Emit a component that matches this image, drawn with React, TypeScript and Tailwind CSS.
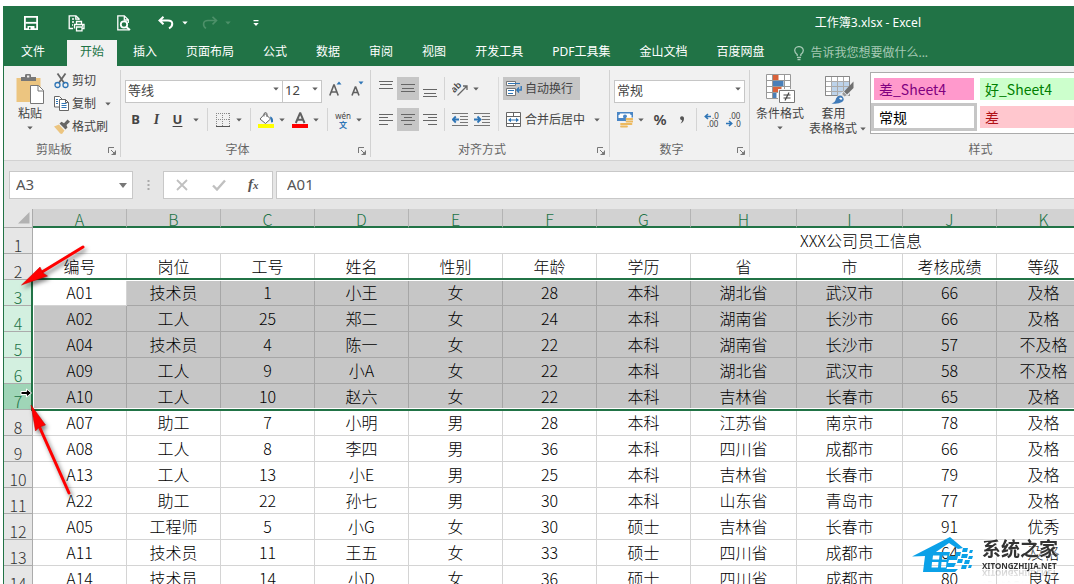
import type { ReactNode } from 'react';

const tabs = ['插入', '页面布局', '公式', '数据', '审阅', '视图', '开发工具', 'PDF工具集', '金山文档', '百度网盘'];

const columns = [
  { letter: 'A', title: '编号', width: 'w-[94px]' },
  { letter: 'B', title: '岗位', width: 'w-[94px]' },
  { letter: 'C', title: '工号', width: 'w-[94px]' },
  { letter: 'D', title: '姓名', width: 'w-[94px]' },
  { letter: 'E', title: '性别', width: 'w-[94px]' },
  { letter: 'F', title: '年龄', width: 'w-[94px]' },
  { letter: 'G', title: '学历', width: 'w-[94px]' },
  { letter: 'H', title: '省', width: 'w-[106px]' },
  { letter: 'I', title: '市', width: 'w-[106px]' },
  { letter: 'J', title: '考核成绩', width: 'w-[94px]' },
  { letter: 'K', title: '等级', width: 'w-[94px]' },
  { letter: '', title: '', width: 'w-[599px]' },
];

const rows = [
  ['A01', '技术员', '1', '小王', '女', '28', '本科', '湖北省', '武汉市', '66', '及格'],
  ['A02', '工人', '25', '郑二', '女', '24', '本科', '湖南省', '长沙市', '66', '及格'],
  ['A04', '技术员', '4', '陈一', '女', '22', '本科', '湖南省', '长沙市', '57', '不及格'],
  ['A09', '工人', '9', '小A', '女', '22', '本科', '湖北省', '武汉市', '58', '不及格'],
  ['A10', '工人', '10', '赵六', '女', '22', '本科', '吉林省', '长春市', '65', '及格'],
  ['A07', '助工', '7', '小明', '男', '28', '本科', '江苏省', '南京市', '78', '及格'],
  ['A08', '工人', '8', '李四', '男', '36', '本科', '四川省', '成都市', '66', '及格'],
  ['A13', '工人', '13', '小E', '男', '25', '本科', '吉林省', '长春市', '79', '及格'],
  ['A22', '助工', '22', '孙七', '男', '30', '本科', '山东省', '青岛市', '77', '及格'],
  ['A05', '工程师', '5', '小G', '女', '30', '硕士', '吉林省', '长春市', '91', '优秀'],
  ['A11', '技术员', '11', '王五', '女', '33', '硕士', '四川省', '成都市', '64', '及格'],
  ['A14', '技术员', '14', '小D', '女', '36', '硕士', '四川省', '成都市', '80', '良好'],
];

function Triangle({ className = 'text-[#606060]' }: { className?: string }) {
  return (
    <svg width="6" height="4" viewBox="0 0 6 4" className={className} aria-hidden="true">
      <path d="M0.3 0.5h5.4L3 3.5z" fill="currentColor" />
    </svg>
  );
}

function Caret({ label }: { label: string }) {
  return (
    <button aria-label={label} className="flex h-full w-4 items-center justify-center">
      <Triangle />
    </button>
  );
}

function Sep() {
  return <span className="mr-[7px] ml-[3px] h-full w-px shrink-0 bg-[#d4d4d4]" />;
}

function IconButton({ label, className = 'w-4', children }: { label: string; className?: string; children: ReactNode }) {
  return (
    <button aria-label={label} className={`flex h-full shrink-0 items-center justify-center ${className}`}>
      {children}
    </button>
  );
}

function Dropdown({ label, value, className }: { label: string; value: string; className: string }) {
  return (
    <span className={`relative block h-full shrink-0 ${className}`}>
      <select
        aria-label={label}
        defaultValue={value}
        className="h-full w-full appearance-none border border-[#c6c6c6] bg-white pb-[3px] pl-0.5 text-[13px] leading-[18px] text-[#444] outline-none"
      >
        <option>{value}</option>
      </select>
      <span className="pointer-events-none absolute inset-y-0 right-1 flex items-center">
        <Triangle />
      </span>
    </span>
  );
}

function Group({ label, width, launcher = true, children }: { label: string; width: string; launcher?: boolean; children: ReactNode }) {
  return (
    <section aria-label={label} className={`flex shrink-0 flex-col border-r border-[#d2d2d2] ${width}`}>
      <div className="h-[72px]">{children}</div>
      <div className="flex h-[15px] items-center pr-1">
        <span className="flex-1 pr-1 text-center text-xs leading-[15px] text-[#666]">{label}</span>
        {launcher ? (
          <button aria-label={`${label}设置`} className="pt-0.5">
            <svg width="8" height="8" viewBox="0 0 8 8" fill="none" stroke="#777" aria-hidden="true">
              <path d="M0.5 6V0.5H6M3 3l3 3M7.5 3.500V7.500H3.500" />
              <path d="M7.500 4v3.500H4z" fill="#777" stroke="none" />
            </svg>
          </button>
        ) : (
          <span className="w-2" />
        )}
      </div>
    </section>
  );
}

function Lines({ rows: spec }: { rows: [number, number, number][] }) {
  return (
    <svg width="14" height="16" viewBox="0 0 14 16" stroke="#666" aria-hidden="true">
      {spec.map(([y, x1, x2]) => (
        <path key={y} d={`M${x1} ${y + 0.5}H${x2}`} />
      ))}
    </svg>
  );
}

function IndentIcon({ increase = false }: { increase?: boolean }) {
  return (
    <svg width="16" height="16" viewBox="0 0 16 16" fill="none" aria-hidden="true">
      <path d="M0 1.500h16M8 4.500h8M8 7.500h8M8 10.500h8M0 13.500h16" stroke="#777" />
      <path d={increase ? 'M0 7.500h6M3.500 4.500l3 3-3 3' : 'M7 7.500H1M3.800 4.500l-3 3 3 3'} stroke="#2e75b6" strokeWidth="1.800" />
    </svg>
  );
}

function TitleBar() {
  return (
    <header className="flex h-[34px] shrink-0 items-center bg-[#217346] pl-5 text-white">
      <button aria-label="保存" className="w-[14px]">
        <svg width="14" height="14" viewBox="0 0 14 14" fill="none" stroke="#fff" strokeWidth="1.800" aria-hidden="true">
          <path d="M0.900 0.900h12.200v12.200H0.900z" />
          <path d="M1.500 6.800h11.500" />
          <path d="M3.500 10h7v3.500h-7z" fill="#fff" stroke="none" />
          <path d="M5 11.200h1.500v2H5z" fill="#217346" stroke="none" />
        </svg>
      </button>
      <button aria-label="快速打印" className="ml-[30px] w-[18px]">
        <svg width="18" height="17" viewBox="0 0 18 17" fill="none" stroke="#fff" strokeWidth="1.300" aria-hidden="true">
          <path d="M5 13.500H1.200V0.800H8l3 3V5M7.800 1v3.200H11" />
          <path d="M4 4h2M4 7h2M4 10h1" />
          <path d="M8.500 9.500V6.500h5v3M6.500 13.500v-4h9.500v4H14M8.500 12h5.500v3.800H8.500zM14 10.800h1" />
        </svg>
      </button>
      <button aria-label="打印预览" className="ml-[30px] w-[16px]">
        <svg width="16" height="16" viewBox="0 0 16 16" fill="none" stroke="#fff" strokeWidth="1.300" aria-hidden="true">
          <path d="M13 14.800H1.800V0.800h6.500l4 4V8M8.300 1v4h4" />
          <circle cx="8" cy="9.500" r="3.200" strokeWidth="1.800" />
          <path d="M10.300 12l3.700 3" strokeWidth="2" />
        </svg>
      </button>
      <button aria-label="撤消" className="ml-[26px] w-4">
        <svg width="16" height="14" viewBox="0 0 16 14" fill="none" stroke="#fff" strokeWidth="2" aria-hidden="true">
          <path d="M5.500 0.800L1.500 4.500l4 3.800M2 4.500h8c5.500 0 5.500 5.500 1 7.800" />
        </svg>
      </button>
      <button aria-label="撤消列表" className="ml-2">
        <Triangle className="text-white" />
      </button>
      <button aria-label="恢复" className="ml-[14px] w-4">
        <svg width="16" height="14" viewBox="0 0 16 14" fill="none" stroke="#4d9069" strokeWidth="1.600" aria-hidden="true">
          <path d="M10.500 0.800l4 3.700-4 3.800M14 4.500H6C0.500 4.500 0.500 10 4 12.300" />
        </svg>
      </button>
      <button aria-label="恢复列表" className="ml-[7px]">
        <Triangle className="text-[#4d9069]" />
      </button>
      <button aria-label="自定义快速访问工具栏" className="ml-[22px]">
        <svg width="6" height="7" viewBox="0 0 6 7" fill="#fff" aria-hidden="true">
          <path d="M0.500 0h5v1.300h-5zM0.300 3h5.400L3 6z" />
        </svg>
      </button>
      <h1 className="mr-[153px] ml-auto text-xs">工作簿3.xlsx - Excel</h1>
    </header>
  );
}

function TabBar() {
  return (
    <nav className="flex h-[26px] shrink-0 items-stretch gap-[3px] bg-[#217346] pl-1 text-xs text-white">
      <button className="shrink-0 px-[13px] pb-0.5">文件</button>
      <button className="ml-[6px] shrink-0 bg-[#f1f1f1] px-[13px] pb-0.5 text-[#217346]">开始</button>
      {tabs.map((tab) => (
        <button key={tab} className="shrink-0 px-[13px] pb-0.5">
          {tab}
        </button>
      ))}
      <button className="ml-[14px] flex shrink-0 items-center gap-[6px] text-[#a6c9b5]">
        <svg width="10" height="15" viewBox="0 0 10 15" fill="none" stroke="currentColor" strokeWidth="1.300" aria-hidden="true">
          <path d="M3.200 10V8.500C1.500 7.200 0.700 6.200 0.700 4.600a4.300 4 0 0 1 8.600 0c0 1.600-0.800 2.600-2.500 3.900V10M3 11.300h4M3.500 13.500h3" />
        </svg>
        告诉我您想要做什么...
      </button>
    </nav>
  );
}

function ClipboardGroup() {
  return (
    <Group label="剪贴板" width="w-[117px]">
      <div className="flex pl-3 text-xs text-[#444]">
        <button className="flex w-[28px] flex-col items-center pt-1">
          <svg width="28" height="30" viewBox="0 0 28 30" aria-hidden="true">
            <path d="M0.500 4h24v24h-24z" fill="#ecc580" />
            <path d="M5 3h4V1.200Q9 0 10.500 0h3Q15 0 15 1.200V3h5v4H5z" fill="#777" />
            <path d="M11 1.500h2.300v2H11z" fill="#f1f1f1" />
            <path d="M14.500 11.500h8l5 5v13h-13z" fill="#fff" stroke="#777" />
            <path d="M22 11.500V17h5.500" fill="none" stroke="#777" />
          </svg>
          <span className="leading-5">粘贴</span>
          <span className="flex h-2 items-center">
            <Triangle />
          </span>
        </button>
        <div className="ml-[10px] flex flex-col">
          <button className="flex h-[22px] items-center gap-0.5">
            <svg width="16" height="16" viewBox="0 0 16 16" fill="none" aria-hidden="true">
              <path d="M3.500 0.500l7 10M11.500 0.500L4.800 10" stroke="#666" strokeWidth="1.800" />
              <circle cx="3.500" cy="12" r="2.500" stroke="#2e75b6" strokeWidth="1.300" />
              <circle cx="11.500" cy="12" r="2.500" stroke="#2e75b6" strokeWidth="1.300" />
            </svg>
            剪切
          </button>
          <div className="flex h-[23px] items-center">
            <button className="flex items-center gap-0.5">
              <svg width="16" height="16" viewBox="0 0 16 16" stroke="#666" fill="#fff" aria-hidden="true">
                <path d="M0.500 0.500h5l3 3v7.500h-8z" />
                <path d="M5.500 3.500h6l3 3v8h-9z" />
                <path d="M2 3.500h2M2 5.500h2M2 7.500h2M7.500 7.500h5M7.500 9.500h5M7.500 11.500h5" stroke="#2e75b6" />
                <path d="M11.500 3.500v3h3" fill="none" />
              </svg>
              复制
            </button>
            <span className="ml-1 h-full">
              <Caret label="复制选项" />
            </span>
          </div>
          <button className="flex h-[23px] items-center gap-0.5">
            <svg width="16" height="16" viewBox="0 0 16 16" aria-hidden="true">
              <path d="M0 7.500l5-2 5.500 6L8 15q-2 0-3.500-2.500z" fill="#ecc580" />
              <path d="M5.500 4.500l2-1.700 2.500 1.500 3.500-3.800L16 2.800 12.500 6l1 2.500-2 2z" fill="#666" />
              <path d="M5.500 5.500l5.500 5.800" stroke="#f1f1f1" />
            </svg>
            格式刷
          </button>
        </div>
      </div>
    </Group>
  );
}

function FontGroup() {
  return (
    <Group label="字体" width="w-[250px]">
      <div className="flex flex-col gap-2 pt-[7px] pl-1 text-[#444]">
        <div className="flex h-[23px] items-center">
          <Dropdown label="字体" value="等线" className="w-[158px]" />
          <Dropdown label="字号" value="12" className="-ml-px w-[40px]" />
          <IconButton label="增大字号" className="ml-[7px] w-[14px]">
            <svg width="14" height="16" viewBox="0 0 14 16" fill="none" aria-hidden="true">
              <path d="M0.800 14.500L4.800 4h0.400l4 10.500M2.300 11h5.400" stroke="#606060" strokeWidth="1.600" />
              <path d="M7.500 3.500L10 0.500l2.500 3z" fill="#2e75b6" />
            </svg>
          </IconButton>
          <IconButton label="减小字号" className="ml-2 w-[14px]">
            <svg width="14" height="16" viewBox="0 0 14 16" fill="none" aria-hidden="true">
              <path d="M1 14.500L4.300 6h0.400L8 14.500M2.300 11.500h4.500" stroke="#606060" strokeWidth="1.600" />
              <path d="M7.500 0.500h5L10 3.500z" fill="#2e75b6" />
            </svg>
          </IconButton>
        </div>
        <div className="flex h-[23px] items-center text-[13px]">
          <button className="w-[21px] font-bold">B</button>
          <button className="w-[21px] font-['Liberation_Serif',serif] text-sm font-bold italic">I</button>
          <button className="w-[21px] font-bold underline underline-offset-2">U</button>
          <Caret label="下划线选项" />
          <Sep />
          <IconButton label="边框">
            <svg width="14" height="14" viewBox="0 0 14 14" stroke="#888" fill="none" aria-hidden="true">
              <path d="M0 0.500h14M0 6.500h14M0.500 0v13M6.500 0v13M13.500 0v13" strokeDasharray="1 1" />
              <path d="M0 13.500h14" stroke="#555" />
            </svg>
          </IconButton>
          <Caret label="边框选项" />
          <Sep />
          <IconButton label="填充颜色">
            <svg width="16" height="16" viewBox="0 0 16 16" fill="none" aria-hidden="true">
              <path d="M7 1.500L2 7l5.500 4.500L12.500 7z" fill="#fff" stroke="#666" />
              <path d="M6 4.500V1.500q1.500-2 3 0V5" stroke="#666" />
              <path d="M12 4.500q3.500 0.500 3 5.500-1 0.800-1.800 0.300z" fill="#2e75b6" />
              <path d="M0 12h16v4H0z" fill="#ff0" />
            </svg>
          </IconButton>
          <Caret label="填充颜色选项" />
          <IconButton label="字体颜色" className="ml-0.5 w-4">
            <svg width="16" height="16" viewBox="0 0 16 16" fill="none" aria-hidden="true">
              <path d="M3.800 11L8 1.200h0.400L12.500 11M5.200 7.800h6" stroke="#606060" strokeWidth="2" />
              <path d="M0 12h16v4H0z" fill="#f00" />
            </svg>
          </IconButton>
          <Caret label="字体颜色选项" />
          <Sep />
          <button className="flex w-4 flex-col items-center text-[8px] leading-[9px]">
            <span>wén</span>
            <span className="font-bold text-[#2e75b6]">文</span>
          </button>
          <Caret label="拼音选项" />
        </div>
      </div>
    </Group>
  );
}

function AlignmentGroup() {
  return (
    <Group label="对齐方式" width="w-[239px]">
      <div className="flex pt-[7px] pl-1 text-xs text-[#444]">
        <div className="flex w-[124px] flex-col gap-2 border-r border-[#dadada]">
          <div className="flex h-[23px] items-center">
            <IconButton label="顶端对齐" className="w-[22px]">
              <Lines rows={[[0, 0, 14], [3, 1, 13], [7, 0, 14]]} />
            </IconButton>
            <IconButton label="垂直居中" className="w-[22px] bg-[#c6c6c6]">
              <Lines rows={[[3, 0, 14], [7, 1, 13], [10, 0, 14]]} />
            </IconButton>
            <IconButton label="底端对齐" className="w-[22px]">
              <Lines rows={[[8, 0, 14], [12, 1, 13], [15, 0, 14]]} />
            </IconButton>
            <Sep />
            <IconButton label="方向">
              <svg width="16" height="16" viewBox="0 0 16 16" fill="none" aria-hidden="true">
                <path d="M5.500 14.500L14.500 5.500M11 5h4v4" stroke="#666" strokeWidth="1.300" />
                <text x="0" y="9" fill="#444" fontSize="9" fontWeight="600" transform="rotate(-45 5 8)">ab</text>
              </svg>
            </IconButton>
            <Caret label="方向选项" />
          </div>
          <div className="flex h-[23px] items-center">
            <IconButton label="左对齐" className="w-[22px]">
              <Lines rows={[[2, 0, 14], [5, 0, 9], [8, 0, 14], [12, 0, 9]]} />
            </IconButton>
            <IconButton label="居中" className="w-[22px] bg-[#c6c6c6]">
              <Lines rows={[[2, 0, 14], [5, 3, 11], [8, 0, 14], [12, 3, 11]]} />
            </IconButton>
            <IconButton label="右对齐" className="w-[22px]">
              <Lines rows={[[2, 0, 14], [5, 5, 14], [8, 0, 14], [12, 5, 14]]} />
            </IconButton>
            <Sep />
            <IconButton label="减少缩进量">
              <IndentIcon />
            </IconButton>
            <IconButton label="增加缩进量" className="ml-[6px] w-4">
              <IndentIcon increase />
            </IconButton>
          </div>
        </div>
        <div className="flex flex-col gap-2 pl-1">
          <button className="flex h-[23px] w-[77px] items-center gap-[3px] bg-[#c6c6c6] pl-[3px]">
            <svg width="16" height="16" viewBox="0 0 16 16" fill="none" aria-hidden="true">
              <path d="M0.500 0.500h9v4h-9zM0.500 7.500h9v7h-9z" fill="#fff" stroke="#777" />
              <path d="M2 2.500h12M2 9.500h6M2 12.500h5" stroke="#2e75b6" />
              <path d="M15.200 5v4H11M13 6.500L10.800 9l2.200 2.500" stroke="#2e75b6" strokeWidth="1.400" />
            </svg>
            自动换行
          </button>
          <div className="flex h-[23px] items-center">
            <button className="flex items-center gap-[3px] pl-[3px]">
              <svg width="16" height="16" viewBox="0 0 16 16" fill="none" aria-hidden="true">
                <path d="M0.500 0.500h14v14h-14zM0.500 4.500h14M0.500 11.500h14M7.500 0.500v4M7.500 11.500v3" stroke="#666" fill="#fff" />
                <path d="M3 8h9" stroke="#2e75b6" />
                <path d="M5 5.800v4.400L2 8zM10 5.800v4.400L13 8z" fill="#2e75b6" />
              </svg>
              合并后居中
            </button>
            <span className="ml-1 h-full">
              <Caret label="合并选项" />
            </span>
          </div>
        </div>
      </div>
    </Group>
  );
}

function NumberGroup() {
  return (
    <Group label="数字" width="w-[140px]">
      <div className="flex flex-col gap-2 pt-[7px] pl-1 text-[#444]">
        <div className="flex h-[23px]">
          <Dropdown label="数字格式" value="常规" className="w-[131px]" />
        </div>
        <div className="flex h-[23px] items-center pl-[3px]">
          <IconButton label="会计数字格式">
            <svg width="16" height="16" viewBox="0 0 16 16" aria-hidden="true">
              <path d="M0 0h16v9H0z" fill="#4a86c5" />
              <path d="M3 1.500h10q0 1.500 1.500 1.500v3H1.500V3Q3 3 3 1.500z" fill="#fff" />
              <circle cx="8" cy="4.500" r="2" fill="#4a86c5" />
              <path d="M9 5.500h7V14h-5v2H3v-5h6z" fill="#f1f1f1" />
              <path d="M9.500 7h6M9.500 9.500h6M9.500 12h5M4 12h5M4 14.500h6" stroke="#ecb95f" strokeWidth="1.800" strokeLinecap="round" />
            </svg>
          </IconButton>
          <Caret label="会计格式选项" />
          <button className="w-[22px] pb-0.5 text-[15px] leading-5 font-semibold">%</button>
          <button aria-label="千位分隔样式" className="flex w-[22px] justify-center">
            <svg width="6" height="8" viewBox="0 0 6 8" fill="#555" aria-hidden="true">
              <path d="M1 2a2 2 0 1 1 4 0.500Q5 6 1.500 7.500 3 6 3 4.300 1 4 1 2z" />
            </svg>
          </button>
          <Sep />
          <IconButton label="增加小数位数">
            <svg width="16" height="16" viewBox="0 0 16 16" fill="none" aria-hidden="true">
              <path d="M7 4.500H1.500M4 2L1.300 4.500 4 7" stroke="#2e75b6" strokeWidth="1.600" />
              <text x="8" y="7" fill="#444" fontSize="8">.0</text>
              <text x="3" y="15" fill="#444" fontSize="8">.00</text>
            </svg>
          </IconButton>
          <IconButton label="减少小数位数" className="ml-[6px] w-4">
            <svg width="16" height="16" viewBox="0 0 16 16" fill="none" aria-hidden="true">
              <path d="M0 11.500h5.500M3 9l2.700 2.500L3 14" stroke="#2e75b6" strokeWidth="1.600" />
              <text x="3" y="7" fill="#444" fontSize="8">.00</text>
              <text x="8" y="15" fill="#444" fontSize="8">.0</text>
            </svg>
          </IconButton>
        </div>
      </div>
    </Group>
  );
}

function StylesGroup() {
  return (
    <Group label="样式" width="w-[478px]" launcher={false}>
      <div className="flex items-start pt-0.5 pl-[6px] text-xs text-[#444]">
        <button className="flex w-12 flex-col items-center pt-0.5">
          <svg width="30" height="30" viewBox="0 0 30 30" fill="none" aria-hidden="true">
            <path d="M1 0.500h25v24H1z" fill="#fff" />
            <path d="M7.500 0.500h6v6h-6zM7.500 12.500h9v6h-9z" fill="#d9623b" />
            <path d="M7.500 6.500h11v6h-11zM7.500 18.500h4v6h-4z" fill="#4a7fb8" />
            <path d="M1.500 0.500h24v24h-24zM1 6.500h25M1 12.500h25M1 18.500h25M7.500 0.500v24M19.500 0.500v24" stroke="#999" />
            <path d="M13 15h17v15H13z" fill="#f1f1f1" />
            <path d="M14.500 16.500h15v12h-15z" fill="#fff" stroke="#777" />
            <path d="M18.500 21h7M18.500 24h7M24 18.500l-4 8" stroke="#444" strokeWidth="1.200" />
          </svg>
          <span className="leading-5">条件格式</span>
          <span className="flex h-2 items-center">
            <Triangle />
          </span>
        </button>
        <button className="ml-[5px] flex flex-col pt-[3px]">
          <svg width="30" height="30" viewBox="0 0 30 30" fill="none" className="ml-[15px]" aria-hidden="true">
            <path d="M1 1.500h24v19H1z" fill="#fff" />
            <path d="M7 7h18v13.500H7z" fill="#bdd3ea" />
            <path d="M1.500 1.500h24v19h-24zM1 6.500h24M1 11.500h24M1 16.500h24M7.500 1.500v19M13.500 1.500v19M19.500 1.500v19" stroke="#aaa" />
            <path d="M1.500 1.500h24v19h-24z" stroke="#888" />
            <path d="M16 29L13 21l11-8 5-6v8L19 27z" fill="#f1f1f1" opacity="0.800" />
            <path d="M29.500 6.500v6.500L23 19.500l-3-3z" fill="#707070" />
            <path d="M19.500 17l3 3-1.800 1.500-2.600-2.600z" fill="#999" />
            <path d="M7.500 28.500q4-1 4.500-5 2-4 6-2.500 3.500 3.500 0 6-4 2.500-10.500 1.500z" fill="#3f7ab8" />
            <path d="M15 23q2.500-1.500 3.500 1-2 2-3.500-1z" fill="#fff" />
          </svg>
          <span className="w-12 pl-px text-center leading-[18px]">套用</span>
          <span className="flex items-center gap-[3px] leading-3">
            表格格式
            <Triangle />
          </span>
        </button>
        <div className="ml-1 grid flex-1 grid-cols-[repeat(3,100px)] gap-[6px] border border-[#ababab] bg-white py-[5px] pl-[3px] text-left font-['Noto_Sans_CJK_SC',sans-serif] text-sm">
          <button className="h-[22px] bg-[#ff99cc] pl-[5px] text-left leading-[22px] text-[#800080]">差_Sheet4</button>
          <button className="h-[22px] bg-[#ccffcc] pl-[5px] text-left leading-[22px] text-[#008000]">好_Sheet4</button>
          <span />
          <button className="h-[22px] bg-white pl-[5px] text-left leading-[22px] text-black ring-3 ring-[#c6c6c6]">常规</button>
          <button className="h-[22px] bg-[#ffc7ce] pl-[5px] text-left leading-[22px] text-[#b01016]">差</button>
        </div>
      </div>
    </Group>
  );
}

function FormulaBar() {
  return (
    <div className="flex h-12 shrink-0 items-start bg-[#e6e6e6] pt-[10px] pl-[5px] text-[15px] text-[#555]">
      <div className="flex h-7 w-[124px] items-center border border-[#c8c8c8] bg-white pr-[5px]">
        <input aria-label="名称框" defaultValue="A3" className="w-full min-w-0 bg-transparent pb-0.5 pl-[6px] outline-none" />
        <button aria-label="名称列表">
          <svg width="8" height="5" viewBox="0 0 8 5" aria-hidden="true">
            <path d="M0 0h8L4 5z" fill="#777" />
          </svg>
        </button>
      </div>
      <svg width="3" height="28" viewBox="0 0 3 28" fill="#aaa" className="mr-[13px] ml-[14px]" aria-hidden="true">
        <path d="M0.500 9h2v2h-2zM0.500 13h2v2h-2zM0.500 17h2v2h-2z" />
      </svg>
      <div className="flex h-7 w-[110px] items-center border border-[#c8c8c8] bg-white pl-3">
        <button aria-label="取消" className="w-3">
          <svg width="12" height="12" viewBox="0 0 12 12" stroke="#c0c0c0" strokeWidth="1.800" aria-hidden="true">
            <path d="M1 1l10 10M11 1L1 11" />
          </svg>
        </button>
        <button aria-label="输入" className="ml-6 w-[14px]">
          <svg width="14" height="12" viewBox="0 0 14 12" fill="none" stroke="#c0c0c0" strokeWidth="2.400" aria-hidden="true">
            <path d="M1 6.500L5 10.500 13 1.500" />
          </svg>
        </button>
        <button aria-label="插入函数" className="ml-[22px] pb-0.5 font-['Liberation_Serif',serif] leading-5 font-bold italic">
          f<span className="text-[11px]">x</span>
        </button>
      </div>
      <input
        aria-label="编辑栏"
        defaultValue="A01"
        className="ml-[3px] h-7 min-w-0 flex-1 border border-r-0 border-[#c8c8c8] bg-white pb-0.5 pl-[10px] outline-none"
      />
    </div>
  );
}

const rowHeader = 'h-[26px] border-r border-b border-[#ababab] pt-[9px] text-center font-light leading-4';
const plainCell = 'h-[26px] overflow-hidden border-r border-b border-[#d4d4d4] bg-white leading-[25px]';
const selectedCell = 'h-[26px] overflow-hidden border-r border-b border-[#a6a6a6] bg-[#c6c6c6] leading-[25px]';

function rowHeaderTone(index: number) {
  if (index < 4) return 'bg-[#d3f0e0] text-[#217346]';
  if (index === 4) return 'bg-[#9fd5b7] text-[#217346]';
  return 'bg-[#e6e6e6] text-[#333]';
}

function Sheet() {
  return (
    <main className="relative min-h-0 flex-1 overflow-hidden bg-white">
      <table className="w-[1685px] table-fixed border-separate border-spacing-0 text-center font-['Noto_Sans_CJK_SC',sans-serif] text-base font-light text-black">
        <colgroup>
          <col className="w-[29px]" />
          {columns.map((column, i) => (
            <col key={i} className={column.width} />
          ))}
        </colgroup>
        <thead>
          <tr>
            <th className="h-[19px] border-r border-b border-[#ababab] bg-[#e6e6e6] p-0">
              <svg width="12" height="12" viewBox="0 0 12 12" className="ml-[14px]" aria-hidden="true">
                <path d="M11.500 0v11.500H0z" fill="#b2b2b2" />
              </svg>
            </th>
            {columns.map((column, i) => (
              <th
                key={i}
                scope="col"
                className="h-[19px] border-r border-b-2 border-r-[#b4b4b4] border-b-[#217346] bg-[#d2d2d2] px-0 pt-1 pb-0 leading-[13px] font-light text-[#217346]"
              >
                {column.letter}
              </th>
            ))}
          </tr>
        </thead>
        <tbody>
          <tr>
            <th scope="row" className={`${rowHeader} bg-[#e6e6e6] text-[#333]`}>1</th>
            <td colSpan={12} className={plainCell}>XXX公司员工信息</td>
          </tr>
          <tr>
            <th scope="row" className={`${rowHeader} bg-[#e6e6e6] text-[#333]`}>2</th>
            {columns.map((column, i) => (
              <td key={i} className={plainCell}>{column.title}</td>
            ))}
          </tr>
          {rows.map((row, r) => (
            <tr key={row[0]}>
              <th scope="row" className={`${rowHeader} ${rowHeaderTone(r)}`}>{r + 3}</th>
              {row.map((value, c) => (
                <td key={c} className={r < 5 && !(r === 0 && c === 0) ? selectedCell : plainCell}>
                  {value}
                </td>
              ))}
              <td className={r < 5 ? selectedCell : plainCell} />
            </tr>
          ))}
        </tbody>
      </table>

      <div className="pointer-events-none absolute top-[69px] -right-1 left-[27px] h-[133px] border-2 border-[#217346]">
        <div className="h-full border border-white" />
      </div>

      <svg width="100" height="300" viewBox="0 0 100 300" className="pointer-events-none absolute top-[30px] left-0 drop-shadow-[2px_3px_2px_rgba(0,0,0,0.5)]" aria-hidden="true">
        <path d="M79 8L38 33" stroke="#f00" strokeWidth="3" strokeLinecap="round" />
        <path d="M17.500 46L36 28 39 34 43.500 37z" fill="#f00" stroke="#c00000" strokeWidth="0.500" />
        <path d="M65 254L35.500 188" stroke="#f00" strokeWidth="3" strokeLinecap="round" />
        <path d="M27 166L41.500 186 35.500 188 31.500 192z" fill="#f00" stroke="#c00000" strokeWidth="0.500" />
      </svg>
      <svg width="13" height="10" viewBox="0 0 13 10" className="pointer-events-none absolute top-[179px] left-[16px]" aria-hidden="true">
        <path d="M1 3.500h5.500V1L11.500 5 6.500 9V6.500H1z" fill="#000" stroke="#fff" />
      </svg>

      <div className="pointer-events-none absolute right-4 bottom-0 flex h-[48px] items-start gap-[6px]">
        <svg width="64" height="48" viewBox="0 0 64 48" fill="#0ba1e8" className="[-webkit-box-reflect:below_-8px_linear-gradient(transparent_60%,rgba(0,0,0,0.15))]" aria-hidden="true">
          <path d="M0 20.500L38 1l13 11-5 1-9-6L21 18h-4l-2 18h-3l1.500-16z" />
          <path fillRule="evenodd" d="M16 16h22l-1 4h9l-1 4h-8l-1 3h8l-2 4h-7l-0.500 2H46l-3 3H11l2-16zM21 19.500l-0.500 4H27l0.500-4zM20 26l-0.500 5.500H26l0.500-5.500zM30.500 19.500l-0.500 4h5l0.500-4zM29.500 26L29 31.500h5l0.500-5.500z" />
          <path d="M44 16h5l-1 4h-5zM51 12h5l-1 4h-5zM50 18h6l-1 4h-6zM58 14h3l-1 3h-3zM57 20h4l-1 3h-4zM46 23h5l-1 4h-5zM53 24h5l-1 4h-5zM50 29h5l-1 4h-5zM57 29h3l-1 3h-3z" />
        </svg>
        <div className="flex flex-col [-webkit-box-reflect:below_-5px_linear-gradient(transparent_55%,rgba(0,0,0,0.3))] [text-shadow:0_0_2px_#fff,0_0_3px_#fff]">
          <span className="font-['Noto_Sans_CJK_SC',sans-serif] text-[19px] leading-6 font-bold text-[#333]">系统之家</span>
          <span className="text-[8px] leading-[12px] font-bold text-[#333]">XITONGZHIJIA.NET</span>
        </div>
      </div>
    </main>
  );
}

export default function App() {
  return (
    <div lang="zh-CN" className="h-screen overflow-hidden bg-white pt-[6px] pl-[3px] font-['Noto_Sans','Noto_Sans_CJK_SC',sans-serif]">
      <div className="flex h-full flex-col overflow-hidden border-l border-[#217346]">
        <TitleBar />
        <TabBar />
        <div className="flex shrink-0 overflow-hidden border-b border-[#d2d2d2] bg-[#f1f1f1] pt-1 pb-[3px]">
          <ClipboardGroup />
          <FontGroup />
          <AlignmentGroup />
          <NumberGroup />
          <StylesGroup />
        </div>
        <FormulaBar />
        <Sheet />
      </div>
    </div>
  );
}
